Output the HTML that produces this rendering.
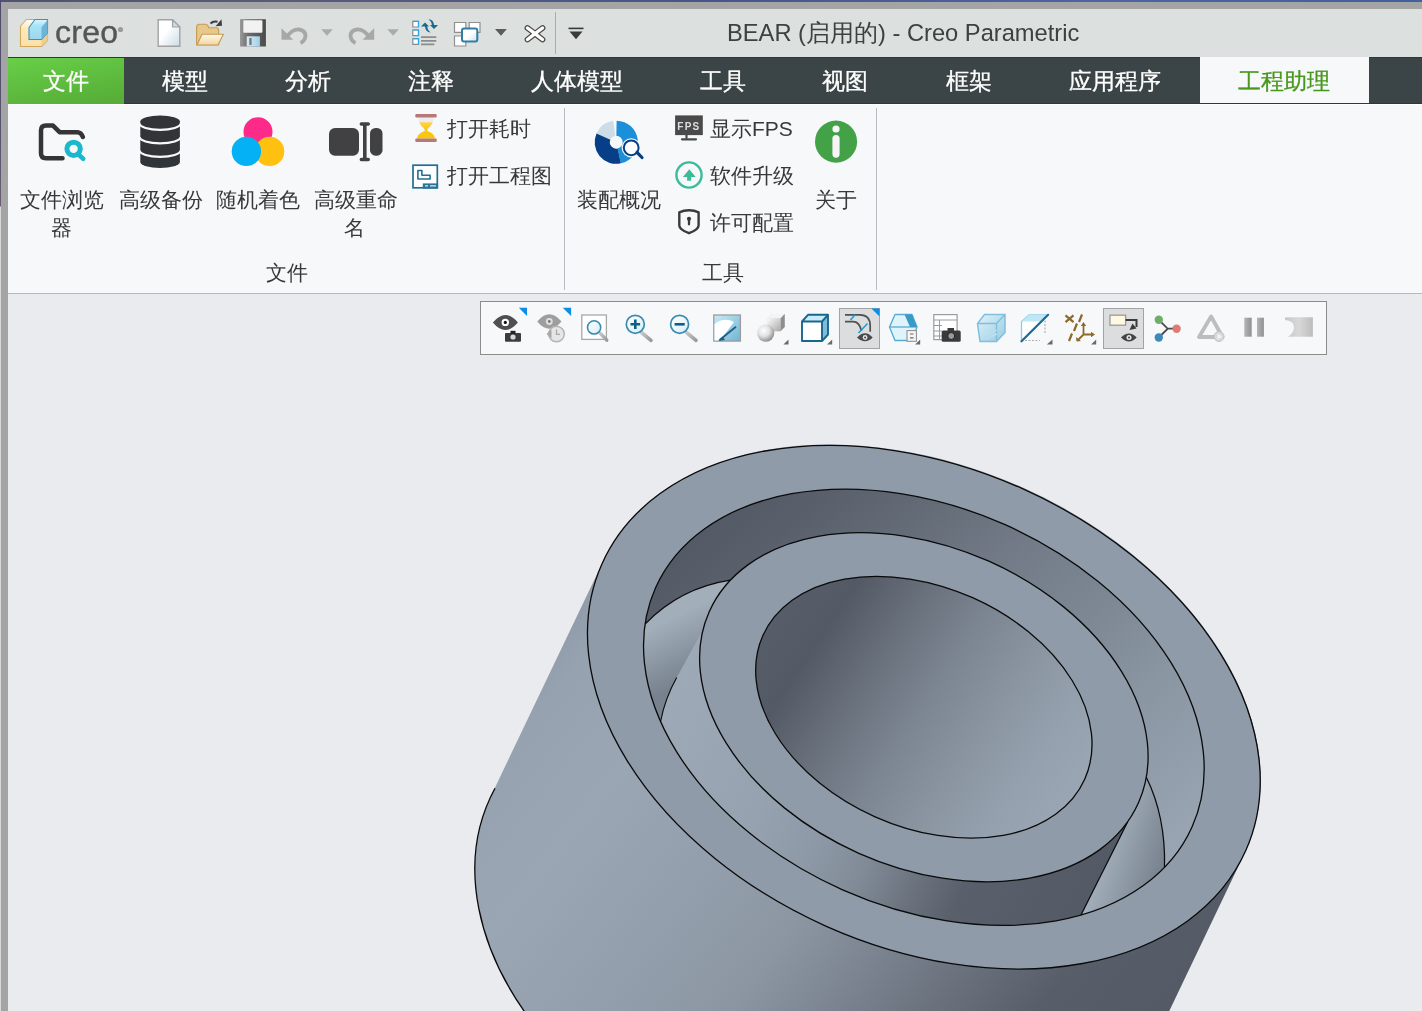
<!DOCTYPE html>
<html><head><meta charset="utf-8">
<style>
*{margin:0;padding:0;box-sizing:border-box}
html,body{width:1422px;height:1011px;overflow:hidden;background:#e9ebee;font-family:"Liberation Sans",sans-serif}
.a{position:absolute}
.t{position:absolute;white-space:nowrap;line-height:1;will-change:transform}
#topband{left:0;top:0;width:1422px;height:2px;background:linear-gradient(90deg,#50526f 0%,#585c7c 20%,#475688 50%,#4c64a6 78%,#40609e 100%)}
#leftband{left:0;top:0;width:1px;height:1011px;background:linear-gradient(180deg,#4a4c6a 0,#5a5570 150px,#6a6070 206px,#d8d8d8 207px,#d8d8d8 100%)}
#frame{left:1px;top:2px;width:1421px;height:1009px;background:#a4a4a4}
#qat{left:8px;top:9px;width:1414px;height:48px;background:#dce0df}
#tabs{left:8px;top:57px;width:1414px;height:47px;background:#3b4446;border-top:1px solid #2f3738;border-bottom:1px solid #30383a}
#filetab{left:8px;top:58px;width:116px;height:46px;background:linear-gradient(170deg,#68cf48,#55ab36)}
#acttab{left:1200px;top:57px;width:169px;height:46px;background:#f7f8fa}
.tab{color:#fff;font-size:23px;top:69.7px;-webkit-text-stroke:0.3px currentColor}
#ribbon{left:8px;top:104px;width:1414px;height:190px;background:#f7f8fa;border-top:1px solid #ffffff;border-bottom:1px solid #b3bcbc}
#view{left:8px;top:294px;width:1414px;height:717px;background:#e9ebee}
.sep{width:1px;background:#b6bcbd}
.lbl{color:#383838;font-size:21px}
#vtb{left:480px;top:301px;width:847px;height:54px;background:#f7f8fa;border:1px solid #8c8c8c}
</style></head><body>
<div class="a" id="topband"></div>
<div class="a" id="frame"></div>
<div class="a" id="leftband"></div>
<div class="a" id="qat"></div>
<div class="a" id="tabs"></div>
<div class="a" id="filetab"></div>
<div class="a" id="acttab"></div>
<div class="t tab" style="left:43px">文件</div>
<div class="t tab" style="left:162px">模型</div>
<div class="t tab" style="left:285px">分析</div>
<div class="t tab" style="left:408px">注释</div>
<div class="t tab" style="left:531px">人体模型</div>
<div class="t tab" style="left:700px">工具</div>
<div class="t tab" style="left:822px">视图</div>
<div class="t tab" style="left:946px">框架</div>
<div class="t tab" style="left:1069px">应用程序</div>
<div class="t tab" style="left:1238px;color:#48981f">工程助理</div>
<div class="t" style="left:727px;top:22.2px;font-size:23.7px;color:#3a4242">BEAR (启用的) - Creo Parametric</div>
<div class="a" id="ribbon"></div>
<div class="a sep" style="left:564px;top:108px;height:182px"></div>
<div class="a sep" style="left:876px;top:108px;height:182px"></div>
<div class="a" id="view"></div>
<div class="a" id="vtb"></div>
<svg class="a" style="left:0;top:0" width="1422" height="1011" viewBox="0 0 1422 1011">
<defs>
<linearGradient id="gBody" gradientUnits="userSpaceOnUse" x1="561.4" y1="424.0" x2="1286.3" y2="990.5"><stop offset="0.1087" stop-color="#8d98a6"/><stop offset="0.1739" stop-color="#97a2b0"/><stop offset="0.2826" stop-color="#9ba6b4"/><stop offset="0.4130" stop-color="#949fad"/><stop offset="0.5348" stop-color="#8c96a3"/><stop offset="0.6783" stop-color="#707884"/><stop offset="0.8011" stop-color="#575e69"/><stop offset="0.9348" stop-color="#535a65"/></linearGradient>
<linearGradient id="gConc" gradientUnits="userSpaceOnUse" x1="503.6" y1="520.2" x2="1344.1" y2="894.3"><stop offset="0.1815" stop-color="#525964"/><stop offset="0.2576" stop-color="#59606b"/><stop offset="0.3370" stop-color="#636b76"/><stop offset="0.4348" stop-color="#717a86"/><stop offset="0.5598" stop-color="#7f8996"/><stop offset="0.6413" stop-color="#8a95a2"/><stop offset="0.7217" stop-color="#929dab"/><stop offset="0.8185" stop-color="#9ca7b5"/></linearGradient>
<linearGradient id="gConv" gradientUnits="userSpaceOnUse" x1="503.6" y1="520.2" x2="1344.1" y2="894.3"><stop offset="0.2446" stop-color="#9ea9b7"/><stop offset="0.3804" stop-color="#97a2b0"/><stop offset="0.4511" stop-color="#8e99a7"/><stop offset="0.5109" stop-color="#818b98"/><stop offset="0.5652" stop-color="#6c747f"/><stop offset="0.6196" stop-color="#59606b"/><stop offset="0.7554" stop-color="#535a65"/></linearGradient>
<linearGradient id="gBore" gradientUnits="userSpaceOnUse" x1="470.8" y1="627.4" x2="1376.9" y2="787.1"><stop offset="0.3087" stop-color="#575e69"/><stop offset="0.3641" stop-color="#535a65"/><stop offset="0.4348" stop-color="#6a727d"/><stop offset="0.5000" stop-color="#7c8592"/><stop offset="0.5652" stop-color="#8a94a1"/><stop offset="0.6304" stop-color="#95a0ae"/><stop offset="0.6913" stop-color="#9ba6b4"/></linearGradient>
<linearGradient id="gWR" gradientUnits="userSpaceOnUse" x1="1105" y1="850" x2="1165" y2="870"><stop offset="0" stop-color="#a3aebb"/><stop offset="1" stop-color="#76808d"/></linearGradient>
<linearGradient id="gWL" gradientUnits="userSpaceOnUse" x1="652" y1="628" x2="680" y2="684"><stop offset="0" stop-color="#a3aebb"/><stop offset="1" stop-color="#78828f"/></linearGradient>
</defs>
<path d="M603.8 559.9 L491.1 795.7 A352.40 239.80 24.00 1 0 1131.4 1090.3 L1131.4 1090.3 L1244.0 854.5 A352.40 239.80 24.00 1 0 603.8 559.9 Z" fill="url(#gBody)"/>
<path d="M495.0 788.2 A352.40 239.80 24.00 0 0 543.8 1036.8" fill="none" stroke="#0a0a0a" stroke-width="1.3"/>
<ellipse cx="923.85" cy="707.25" rx="352.40" ry="239.80" transform="rotate(24.00 923.85 707.25)" fill="#909baa" stroke="#0a0a0a" stroke-width="1.3"/>
<ellipse cx="923.85" cy="707.25" rx="293.67" ry="199.83" transform="rotate(24.00 923.85 707.25)" fill="url(#gConc)"/>
<path d="M645.1 624.1 Q680 588 730.3 580.2 A234.93 159.87 24.00 1 0 1127.7 821.7 L1081.0 915.0 A293.67 199.83 24.00 0 1 645.1 624.1 Z" fill="url(#gConv)"/>
<path d="M1127.7 821.7 L1081.0 915.0 A293.67 199.83 24.00 0 0 1164.5 867.3 Q1165.8 816.9 1146.3 777.3 A234.93 159.87 24.00 0 1 1127.7 821.7 Z" fill="url(#gWR)"/>
<path d="M645.1 624.1 Q680 588 730.3 580.2 L676.7 677.5 Q664.8 698.8 660.6 721.5 A293.67 199.83 24.00 0 1 645.1 624.1 Z" fill="url(#gWL)"/>
<path d="M645.1 624.1 Q680 588 730.3 580.2" fill="none" stroke="#0a0a0a" stroke-width="1.25"/>
<path d="M1127.7 821.7 L1081.0 915.0" fill="none" stroke="#0a0a0a" stroke-width="1.25"/>
<path d="M1146.3 777.3 Q1165.8 816.9 1164.5 867.3" fill="none" stroke="#0a0a0a" stroke-width="1.25"/>
<path d="M676.7 677.5 Q664.8 698.8 660.6 721.5" fill="none" stroke="#0a0a0a" stroke-width="1.1"/>
<ellipse cx="923.85" cy="707.25" rx="293.67" ry="199.83" transform="rotate(24.00 923.85 707.25)" fill="none" stroke="#0a0a0a" stroke-width="1.3"/>
<ellipse cx="923.85" cy="707.25" rx="234.93" ry="159.87" transform="rotate(24.00 923.85 707.25)" fill="#909baa" stroke="#0a0a0a" stroke-width="1.3"/>
<ellipse cx="923.85" cy="707.25" rx="176.20" ry="119.90" transform="rotate(24.00 923.85 707.25)" fill="url(#gBore)" stroke="#0a0a0a" stroke-width="1.3"/>
</svg>
<svg class="a" style="left:0;top:0" width="1422" height="60" viewBox="0 0 1422 60">
<defs>
<linearGradient id="qPage" x1="0" y1="0" x2="1" y2="1"><stop offset="0.4" stop-color="#ffffff"/><stop offset="1" stop-color="#c9dbe6"/></linearGradient>
<linearGradient id="qFold" x1="0" y1="0" x2="0" y2="1"><stop offset="0" stop-color="#fffaf0"/><stop offset="1" stop-color="#f2d49a"/></linearGradient>
<linearGradient id="qSave" x1="0" y1="0" x2="1" y2="0"><stop offset="0" stop-color="#9a9a9a"/><stop offset="0.3" stop-color="#6e6e6e"/><stop offset="1" stop-color="#4a4a4a"/></linearGradient>
<linearGradient id="qShut" x1="0" y1="0" x2="1" y2="0"><stop offset="0" stop-color="#d8ecf6"/><stop offset="1" stop-color="#9fd0ea"/></linearGradient>
<linearGradient id="qCubeF" x1="0" y1="0" x2="0" y2="1"><stop offset="0" stop-color="#ffffff"/><stop offset="0.35" stop-color="#fde8b8"/><stop offset="1" stop-color="#fbe0a8"/></linearGradient>
<linearGradient id="qCubeB" x1="0" y1="0" x2="0" y2="1"><stop offset="0" stop-color="#e0f6fd"/><stop offset="0.3" stop-color="#a8e4f8"/><stop offset="1" stop-color="#9ad8f0"/></linearGradient>
<linearGradient id="qWin" x1="0" y1="0" x2="1" y2="1"><stop offset="0.5" stop-color="#ffffff"/><stop offset="1" stop-color="#cfe0ea"/></linearGradient>
</defs>
<!-- creo cube logo -->
<g stroke-linejoin="round">
<path d="M20.5 26 L26.5 19.5 L47.5 19.5 L47.5 40.5 L41.5 46.5 L20.5 46.5 Z" fill="url(#qCubeF)" stroke="#d4a85a" stroke-width="1.1"/>
<path d="M41.5 46.5 L47.5 40.5 L47.5 33 L41.5 39.5 Z" fill="#f0cf8a"/>
<path d="M29 27.5 L35 19.5 L47.5 19.5 L47.5 33 L41.5 39.5 L29 39.5 Z" fill="url(#qCubeB)" stroke="#3f8fb8" stroke-width="1.1"/>
<path d="M41.5 27.5 L47.5 20 L47.5 33 L41.5 39.5 Z" fill="#6fb4d6"/>
</g>
<!-- new doc -->
<path d="M158.2 19.7 H172.5 L179.8 27 V46.3 H158.2 Z" fill="url(#qPage)" stroke="#a2a2a2" stroke-width="1.4"/>
<path d="M172.5 19.7 V27 H179.8 Z" fill="#c4dcea" stroke="#a2a2a2" stroke-width="1.2" stroke-linejoin="round"/>
<!-- open folder -->
<path d="M196.6 44.6 V27.5 Q196.6 24.3 199.5 24.3 H205.5 Q207.5 24.3 208.3 26.5 L208.8 27.8 H216.2 Q218.6 27.8 218.6 30.2 V44.6 Z" fill="#e8c888" stroke="#c49a55" stroke-width="1.1"/>
<path d="M197 45 L202 34.2 H223.4 L218 45 Z" fill="url(#qFold)" stroke="#c49a55" stroke-width="1.1" stroke-linejoin="round"/>
<path d="M210.5 23.5 Q213.5 20.5 217.5 21.8" fill="none" stroke="#3b3f42" stroke-width="2"/>
<path d="M215.6 26.2 L222 25.8 L221.5 19.3 Z" fill="#3b3f42"/>
<!-- save -->
<path d="M240 19.2 H265.9 V46.5 H240 Z" fill="url(#qSave)"/>
<rect x="243.3" y="20.2" width="19.1" height="12.5" rx="0.8" fill="#f2f2f2"/>
<rect x="246.7" y="36.3" width="13.2" height="10.2" fill="url(#qShut)"/>
<rect x="249.3" y="38" width="2.3" height="7" fill="#777"/>
<!-- undo -->
<path d="M286.5 37.5 Q292 29 299 29.5 Q305.5 30.5 305.5 36 Q305 41 300.5 43" fill="none" stroke="#a6a8a8" stroke-width="3.8"/>
<path d="M281.5 28.3 V39.8 H293.2 Z" fill="#a6a8a8"/>
<path d="M321.2 29.2 H332.8 L327 35.8 Z" fill="#aaacac"/>
<!-- redo -->
<path d="M369.4 37.5 Q364 29 357 29.5 Q350.5 30.5 350.5 36 Q351 41 355.5 43" fill="none" stroke="#a6a8a8" stroke-width="3.8"/>
<path d="M374.2 28.3 V39.8 H362.6 Z" fill="#a6a8a8"/>
<path d="M387.3 29.2 H398.9 L393.1 35.8 Z" fill="#aaacac"/>
<!-- regenerate -->
<g stroke-width="1.2">
<path d="M412.8 21.3 H418.5 V27 H412.8 Z" fill="#fff" stroke="#8a8a8a"/>
<path d="M412.8 21.3 H418.5 V27" fill="none" stroke="#2aa8e8"/>
<path d="M412.8 30 H418.5 V35.7 H412.8 Z" fill="#fff" stroke="#8a8a8a"/>
<path d="M412.8 30 H418.5 V35.7" fill="none" stroke="#2aa8e8"/>
<path d="M412.8 38.7 H418.5 V44.4 H412.8 Z" fill="#fff" stroke="#8a8a8a"/>
<path d="M412.8 38.7 H418.5 V44.4" fill="none" stroke="#2aa8e8"/>
</g>
<path d="M421 37.1 H436.3 M421 40.9 H436.3 M421 44.4 H434.3" stroke="#8c8c8c" stroke-width="1.9"/>
<path d="M421 26.5 L425 22.5 L429 26.5 H427 Q427.5 30 430.5 32.5 Q425.5 32 425 26.5 Z" fill="#17698c"/>
<path d="M438 25 L434 29 L430 25 H432 Q431.5 21.5 428.5 19.3 Q433.5 19.5 434 25 Z" fill="#17698c"/>
<!-- windows -->
<path d="M454.5 22.5 H465.8 V32.3 H454.5 Z M469.2 22.5 H480 V32.3 H469.2 Z M454.5 36 H465.8 V46 H454.5 Z" fill="#fff" stroke="#8f8f8f" stroke-width="1.2"/>
<rect x="462" y="28.5" width="15.3" height="13" rx="2" fill="url(#qWin)" stroke="#2f7ea6" stroke-width="2"/>
<path d="M495 28.9 H506.9 L501 35.8 Z" fill="#5c5c5c"/>
<!-- close X -->
<path d="M527.5 28 L535 33.7 L542.5 28 M527.5 39.5 L535 33.7 L542.5 39.5" fill="none" stroke="#4a4a44" stroke-width="5.8" stroke-linecap="round"/>
<path d="M527.5 28 L535 33.7 L542.5 28 M527.5 39.5 L535 33.7 L542.5 39.5" fill="none" stroke="#ffffff" stroke-width="3.4" stroke-linecap="round"/>
<rect x="555" y="12" width="1" height="42" fill="#a9adad"/>
<rect x="568.5" y="27.6" width="15" height="1.6" fill="#3a3a3a"/>
<path d="M569.5 31.6 H582.5 L576 39.3 Z" fill="#3a3a3a"/>
</svg>
<div class="t" style="left:54.5px;top:15.5px;font-size:32px;color:#545656;letter-spacing:0.3px;-webkit-text-stroke:0.4px #545656">creo</div>
<svg class="a" style="left:116px;top:25px" width="9" height="9"><circle cx="4.5" cy="4.5" r="2.6" fill="#9a9c9c"/></svg>
<svg class="a" style="left:0;top:100px" width="900" height="150" viewBox="0 100 900 150">
<defs>
<linearGradient id="rSand" x1="0" y1="0" x2="0" y2="1"><stop offset="0" stop-color="#ffd54a"/><stop offset="1" stop-color="#f5c400"/></linearGradient>
</defs>
<!-- file browser folder -->
<path d="M62.5 158.3 H46 Q41 158.3 41 153.3 V130.6 Q41 125.6 46 125.6 H53 L59.6 132.2 H77.5 Q81 132.2 82.9 137" fill="none" stroke="#353535" stroke-width="4.5" stroke-linecap="round" stroke-linejoin="round"/>
<circle cx="73.6" cy="148.85" r="6.7" fill="none" stroke="#1ab8cc" stroke-width="5"/>
<path d="M79.6 155.5 L83.2 158.7" stroke="#1ab8cc" stroke-width="4.6" stroke-linecap="round"/>
<!-- database -->
<g fill="#323538">
<path d="M140.3 121.5 V162 A19.8 6 0 0 0 179.9 162 V121.5 A19.8 6 0 0 0 140.3 121.5 Z"/>
</g>
<g fill="none" stroke="#f7f8fa" stroke-width="2.3">
<path d="M139.5 123.6 A20.6 6.2 0 0 0 180.7 123.6"/>
<path d="M139.5 137.1 A20.6 6.2 0 0 0 180.7 137.1"/>
<path d="M139.5 150.6 A20.6 6.2 0 0 0 180.7 150.6"/>
</g>
<!-- random color circles -->
<circle cx="258" cy="131.7" r="14.5" fill="#fe2a8a"/>
<circle cx="269.6" cy="151.4" r="14.7" fill="#ffc010"/>
<circle cx="246.4" cy="151.4" r="14.7" fill="#04b1f4"/>
<!-- rename -->
<rect x="329" y="128" width="30" height="27.7" rx="6" fill="#414143"/>
<rect x="370" y="128" width="12.5" height="27.7" rx="5.5" fill="#414143"/>
<path d="M364.8 124.5 V159" stroke="#414143" stroke-width="3.6"/>
<path d="M361.3 124 H368.3 M361.3 159.5 H368.3" stroke="#414143" stroke-width="3.4" stroke-linecap="round"/>
<!-- hourglass -->
<path d="M418.5 117.5 H433.5 Q433.5 124 428.5 128.5 Q427 130 428.5 131.5 Q433.5 135 433.5 138.3 H418.5 Q418.5 135 423.5 131.5 Q425 130 423.5 128.5 Q418.5 124 418.5 117.5 Z" fill="#eeeaf4"/>
<path d="M419.3 122.3 H432.7 Q431.5 126 428 128 L427 130.5 H425 L424 128 Q420.5 126 419.3 122.3 Z" fill="url(#rSand)"/>
<path d="M425.2 129 H426.8 L427 131 Q434.5 133 435 138.6 H417 Q417.5 133 425 131 Z" fill="#f9c80c"/>
<rect x="415.3" y="114" width="21.4" height="3.6" rx="1" fill="#b77878"/>
<rect x="415.3" y="138.4" width="21.4" height="3.6" rx="1" fill="#b77878"/>
<!-- drawing -->
<rect x="413" y="165.2" width="24.3" height="22.6" fill="#ffffff" stroke="#236f92" stroke-width="1.7"/>
<path d="M417.9 170.5 H421.9 V175.3 H430.1 V179 H417.9 Z" fill="none" stroke="#236f92" stroke-width="1.6" stroke-linejoin="round"/>
<rect x="422.8" y="183.4" width="15.3" height="5.2" fill="#2a7398"/>
<path d="M425 185.8 H428 M430 185.8 H436" stroke="#dfeaf0" stroke-width="1.3"/>
<!-- assembly overview -->
<path d="M596.52 133.46 A21.6 21.6 0 0 1 613.24 120.86 L615.36 135.91 A6.4 6.4 0 0 0 610.40 139.65 Z" fill="#cddde8"/>
<path d="M616.63 120.65 A21.6 21.6 0 0 1 620.93 163.34 L617.64 148.50 A6.4 6.4 0 0 0 616.36 135.85 Z" fill="#1b8fd9"/>
<path d="M620.93 163.34 A21.6 21.6 0 0 1 596.52 133.46 L610.40 139.65 A6.4 6.4 0 0 0 617.64 148.50 Z" fill="#063f87"/>
<circle cx="631.2" cy="147.8" r="9.6" fill="#f7f8fa"/>
<path d="M637 152.3 L642 157.5" stroke="#f7f8fa" stroke-width="5.5" stroke-linecap="round"/>
<circle cx="631.2" cy="147.8" r="7.4" fill="#ffffff" stroke="#063f87" stroke-width="2"/>
<path d="M637 152.3 L642 157.5" stroke="#063f87" stroke-width="3.2" stroke-linecap="round"/>
<!-- FPS -->
<rect x="675.1" y="115.4" width="27.7" height="19.7" fill="#4a4a4a"/>
<text x="688.9" y="130.2" font-family="Liberation Sans" font-size="10" font-weight="bold" fill="#dddddd" text-anchor="middle" letter-spacing="1.3">FPS</text>
<path d="M686.5 135 V137.5 M682 139.3 H696" stroke="#4a4a4a" stroke-width="2.2" stroke-linecap="round"/>
<!-- upgrade -->
<circle cx="689" cy="175" r="12.6" fill="none" stroke="#3cbb9b" stroke-width="2.4"/>
<path d="M682.9 176.9 L689.3 169.2 L695.7 176.9 H691.2 V180.7 H687.1 V176.9 Z" fill="#3cbb9b"/>
<!-- shield -->
<path d="M689 210.3 Q694.5 210.3 698.6 212.3 V225.5 Q698.6 229.5 689 233.2 Q679.3 229.5 679.3 225.5 V212.3 Q683.5 210.3 689 210.3 Z" fill="none" stroke="#3a3a3a" stroke-width="2.4" stroke-linejoin="round"/>
<circle cx="689" cy="218.8" r="2.1" fill="#3a3a3a"/>
<path d="M689 219 V224.3" stroke="#3a3a3a" stroke-width="2.3" stroke-linecap="round"/>
<!-- info -->
<circle cx="836.05" cy="141.65" r="21.05" fill="#43a148"/>
<circle cx="836" cy="129" r="3.6" fill="#f7f3f7"/>
<rect x="832.4" y="135" width="7.2" height="22.7" rx="3.6" fill="#f7f3f7"/>
</svg>
<svg class="a" style="left:480px;top:300px" width="850" height="56" viewBox="480 300 850 56">
<defs>
<linearGradient id="vLens" x1="0" y1="0" x2="1" y2="1"><stop offset="0" stop-color="#ffffff"/><stop offset="1" stop-color="#d5eef8"/></linearGradient>
<linearGradient id="vHandle" x1="0" y1="0" x2="1" y2="1"><stop offset="0" stop-color="#c8c8c8"/><stop offset="1" stop-color="#9a9a9a"/></linearGradient>
<linearGradient id="vRep" x1="0" y1="0" x2="1" y2="1"><stop offset="0" stop-color="#c9ebf7"/><stop offset="1" stop-color="#6fb4d2"/></linearGradient>
<radialGradient id="vSph" cx="0.38" cy="0.35" r="0.75"><stop offset="0" stop-color="#ffffff"/><stop offset="0.45" stop-color="#e2e2e2"/><stop offset="1" stop-color="#7a7a7a"/></radialGradient>
<linearGradient id="vCubeS" x1="0" y1="0" x2="1" y2="1"><stop offset="0" stop-color="#fafafa"/><stop offset="1" stop-color="#a8a8a8"/></linearGradient>
<linearGradient id="vGlass" x1="0" y1="0" x2="1" y2="1"><stop offset="0" stop-color="#d9f1fa"/><stop offset="1" stop-color="#7fc0dc"/></linearGradient>
<linearGradient id="vGray" x1="0" y1="0" x2="1" y2="0"><stop offset="0" stop-color="#b5b5b5"/><stop offset="1" stop-color="#909090"/></linearGradient>
<linearGradient id="vBar" x1="0" y1="0" x2="1" y2="0"><stop offset="0" stop-color="#c8c8c8"/><stop offset="0.5" stop-color="#d8d8d8"/><stop offset="1" stop-color="#bdbdbd"/></linearGradient>
</defs>
<!-- 1 saved views -->
<path d="M492.9 322.5 Q505.3 307.5 517.9 322.5 Q505.3 337.5 492.9 322.5 Z" fill="#4f4f4f"/>
<circle cx="505.3" cy="322.4" r="3.7" fill="#ffffff"/>
<circle cx="505.3" cy="322.4" r="1.6" fill="#111"/>
<rect x="505" y="333" width="16" height="8.7" rx="1" fill="#3c3c3c"/>
<rect x="510.5" y="330.8" width="5" height="3" fill="#222"/>
<circle cx="513" cy="337" r="2.6" fill="#d8d8d8"/>
<path d="M518.8 307.8 H527 V316 Z" fill="#0a8ee8"/>
<!-- 2 history -->
<path d="M537.2 321.5 Q549.3 307 561.5 321.5 Q549.3 336 537.2 321.5 Z" fill="#9e9e9e"/>
<circle cx="549.3" cy="321.5" r="3.4" fill="#e0e0e0"/>
<circle cx="549.3" cy="321.5" r="1.4" fill="#777"/>
<circle cx="556.5" cy="334" r="7.8" fill="#e6e6e6" stroke="#b4b4b4" stroke-width="1.5"/>
<path d="M556.5 329.5 V334.3 H560" fill="none" stroke="#a8a8a8" stroke-width="1.3"/>
<path d="M546.5 334 L551.5 329.5 V338.5 Z" fill="#a8a8a8"/>
<path d="M562.7 307.8 H571.1 V316 Z" fill="#0a8ee8"/>
<!-- 3 refit -->
<rect x="581.8" y="315" width="24.6" height="24.4" fill="#ffffff" stroke="#a8a8a8" stroke-width="1.3"/>
<path d="M600 333 L606.8 340.2" stroke="url(#vHandle)" stroke-width="3.4" stroke-linecap="round"/>
<circle cx="594.1" cy="327.4" r="6.6" fill="url(#vLens)" stroke="#3a8bb0" stroke-width="1.6"/>
<!-- 4 zoom in -->
<path d="M641.5 332.5 L651 340.3" stroke="url(#vHandle)" stroke-width="3.6" stroke-linecap="round"/>
<circle cx="635.3" cy="324.3" r="9" fill="url(#vLens)" stroke="#3a8bb0" stroke-width="1.7"/>
<path d="M630.5 324.3 H640.1 M635.3 319.5 V329.1" stroke="#0f5e86" stroke-width="2.6"/>
<!-- 5 zoom out -->
<path d="M686.5 332.5 L696 340.3" stroke="url(#vHandle)" stroke-width="3.6" stroke-linecap="round"/>
<circle cx="679.6" cy="324.3" r="9" fill="url(#vLens)" stroke="#3a8bb0" stroke-width="1.7"/>
<path d="M674.6 324.3 H684.7" stroke="#0f5e86" stroke-width="2.6"/>
<!-- 6 repaint -->
<rect x="713.8" y="315" width="26.6" height="26.1" fill="url(#vRep)" stroke="#9c9c9c" stroke-width="1.3"/>
<path d="M714.5 340.4 V324 Q724 316.5 734 322 L720 340.4 Z" fill="#ffffff"/>
<path d="M719.5 340 L736 326.8" stroke="#1d5f86" stroke-width="1.8"/>
<path d="M718 341 L723 337 L725 340 Z" fill="#1d5f86"/>
<!-- 7 shading -->
<path d="M767.8 318.5 L772 314.1 H784.7 V327 L780.5 331.2 H767.8 Z" fill="#cfcfcf"/>
<path d="M767.8 318.5 L772 314.1 H784.7 L780.5 318.5 Z" fill="#f4f4f4"/>
<path d="M780.5 318.5 L784.7 314.1 V327 L780.5 331.2 Z" fill="#8e8e8e"/>
<rect x="767.8" y="318.5" width="12.7" height="12.7" fill="url(#vCubeS)"/>
<circle cx="765.7" cy="333.1" r="8.6" fill="url(#vSph)"/>
<path d="M783.4 344.5 H788.5 V339.4 Z" fill="#6a6a6a"/>
<!-- 8 named views cube -->
<path d="M802 321.5 L808 314.8 H828 V334.5 L822 341 H802 Z" fill="#7fbcd9"/>
<path d="M802 321.5 L808 314.8 H828 L822 321.5 Z" fill="#c7ebf8"/>
<rect x="802" y="321.5" width="20" height="19.5" fill="#ffffff"/>
<path d="M802 321.5 L808 314.8 H828 V334.5 L822 341 H802 Z M802 321.5 H822 V341 M822 321.5 L828 314.8" fill="none" stroke="#19668e" stroke-width="1.9" stroke-linejoin="round"/>
<path d="M827 344.5 H832.2 V339.4 Z" fill="#6a6a6a"/>
<!-- 9 selected button -->
<rect x="839.5" y="308.5" width="40" height="40" fill="#dcdddf" stroke="#a3a3a3" stroke-width="1"/>
<path d="M871.4 308.5 H879.5 V316.6 Z" fill="#0a8ee8"/>
<path d="M845 314.8 H860 Q870.2 314.8 870.2 326 V331.8 M845 321.7 H853 Q859.5 321.7 861.5 331" fill="none" stroke="#505050" stroke-width="1.7"/>
<path d="M850.5 320 L855 314.8 M858.5 333 L867.5 323.5" stroke="#1aa0d8" stroke-width="1.6"/>
<path d="M857 337.5 Q865.1 329 872.7 337.5 Q865.1 345 857 337.5 Z" fill="#4a4a4a"/>
<circle cx="865.1" cy="337.5" r="2.4" fill="#e6e6e6"/>
<circle cx="865.1" cy="337.5" r="1" fill="#444"/>
<!-- 10 layers hex -->
<path d="M889.5 327 L895 314.5 H912 L917 327 L912 340.5 H895 Z" fill="#dff3fb" stroke="#58acd2" stroke-width="1.4" stroke-linejoin="round"/>
<path d="M889.5 327 H917" stroke="#58acd2" stroke-width="1.3"/>
<path d="M904.5 314.5 L912 314.5 L917 327 L910 327 Z" fill="#3a9ac6"/>
<rect x="907" y="330.6" width="9.4" height="10.7" fill="#f4f4f4" stroke="#8a8a8a" stroke-width="1"/>
<path d="M910 334 H913.5 M910 337.8 H913.5" stroke="#666" stroke-width="1.2"/>
<path d="M915.1 344.5 H920.2 V339.4 Z" fill="#6a6a6a"/>
<!-- 11 table camera -->
<rect x="933.8" y="314.6" width="23.3" height="25" fill="#ffffff" stroke="#9c9c9c" stroke-width="1.2"/>
<path d="M934 320 H957 M934 325.5 H942 M934 331 H942 M934 336 H942 M939.5 320 V339.5" stroke="#9c9c9c" stroke-width="1"/>
<rect x="941.7" y="330.5" width="19" height="11.2" rx="1.5" fill="#3a3a3a"/>
<rect x="947.5" y="328" width="6.5" height="3" fill="#3a3a3a"/>
<circle cx="951.2" cy="336" r="3.5" fill="#9a9a9a" stroke="#222" stroke-width="1"/>
<!-- 12 transparent cube -->
<path d="M977.5 323.5 L984.5 314.5 H1005 V332.5 L996.5 341.5 H980 Z" fill="url(#vGlass)" opacity="0.8"/>
<path d="M977.5 323.5 L984.5 314.5 H1005 V332.5 L996.5 341.5 H980 Z M977.5 323.5 H996.5 L1005 314.5 M996.5 323.5 V341.5" fill="none" stroke="#7fc0dc" stroke-width="1.5"/>
<path d="M985 336 L996.5 330 M986 339 L997 334" stroke="#b8e0ef" stroke-width="1.5"/>
<!-- 13 section -->
<path d="M1021.5 341 V321.5 L1029 314.8 H1048 Z" fill="#ffffff" stroke="#8ccde6" stroke-width="1.3"/>
<path d="M1021.5 321.5 L1029 314.8 H1048 L1041 321.5 Z" fill="#bfe6f5"/>
<path d="M1025 340.5 H1040 M1045 333 V318" stroke="#b0b0b0" stroke-width="1.2" stroke-dasharray="2 1.5"/>
<path d="M1021.5 341.3 L1048.1 314.8" stroke="#1d6a98" stroke-width="2.2" stroke-linecap="round"/>
<path d="M1046.8 344.5 H1052.5 V339.4 Z" fill="#6a6a6a"/>
<!-- 14 datum display -->
<path d="M1065.5 315.3 L1073.5 322.2 M1073.5 315.3 L1065.5 322.2" stroke="#8b6a2a" stroke-width="2.2"/>
<path d="M1079 322 L1082 314.5 M1074 331 L1077 323.5 M1069 341 L1072 333.5" stroke="#8b6a2a" stroke-width="2.2"/>
<path d="M1083.5 334.5 V325 M1083.5 334.5 H1092 M1083.5 334.5 L1078 340" stroke="#8b6a2a" stroke-width="1.8"/>
<path d="M1080.8 326 L1083.5 322 L1086.2 326 Z M1091 331.8 L1095 334.5 L1091 337.2 Z M1076 337 L1076.5 341.5 L1081 341 Z" fill="#8b6a2a"/>
<path d="M1091.1 344.5 H1096.2 V339.4 Z" fill="#6a6a6a"/>
<!-- 15 selected button -->
<rect x="1103.5" y="308.5" width="40" height="40" fill="#dcdddf" stroke="#a3a3a3" stroke-width="1"/>
<rect x="1110" y="315.2" width="15.6" height="10" fill="#fff8e2" stroke="#9a9a9a" stroke-width="1.3"/>
<path d="M1125.6 320 H1136.5 V327" fill="none" stroke="#3a3a3a" stroke-width="2"/>
<path d="M1132.5 323.5 L1136.5 328.5 L1129.5 330 Z" fill="#3a3a3a"/>
<path d="M1121 337.5 Q1129 329.5 1136.7 337.5 Q1129 345.5 1121 337.5 Z" fill="#444"/>
<circle cx="1129" cy="337.5" r="2.5" fill="#e6e6e6"/>
<circle cx="1129" cy="337.5" r="1" fill="#444"/>
<!-- 16 graph -->
<path d="M1158.8 319.8 L1167.7 328.7 L1158.8 337.5 M1167.7 328.7 H1176.6" stroke="#4a4a4a" stroke-width="1.8" fill="none"/>
<circle cx="1158.8" cy="319.8" r="4.2" fill="#6fae6a"/>
<circle cx="1176.6" cy="328.7" r="4.2" fill="#e07a74"/>
<circle cx="1158.8" cy="337.5" r="4.2" fill="#3d8ab8"/>
<!-- 17 triangle play -->
<path d="M1211.1 316.5 L1199 337 H1222.5 Z" fill="none" stroke="#bdbdbd" stroke-width="3.8" stroke-linejoin="round"/>
<circle cx="1219" cy="336.5" r="5" fill="#dadada" stroke="#c0c0c0" stroke-width="1"/>
<path d="M1217.5 333.5 L1222 336.5 L1217.5 339.5 Z" fill="#f4f4f4"/>
<!-- 18 pause -->
<rect x="1244.3" y="317.7" width="7.4" height="19" fill="url(#vGray)"/>
<rect x="1257" y="317.7" width="6.9" height="19" fill="url(#vGray)"/>
<!-- 19 shape -->
<path d="M1285 317.2 H1312.9 V336.7 H1288 Q1294 333 1294 327 Q1294 321 1285 320 Z" fill="url(#vBar)"/>
</svg>

<!-- ribbon labels -->
<div class="t lbl" style="left:20px;top:189px">文件浏览</div>
<div class="t lbl" style="left:51px;top:217px">器</div>
<div class="t lbl" style="left:119px;top:189px">高级备份</div>
<div class="t lbl" style="left:216px;top:189px">随机着色</div>
<div class="t lbl" style="left:314px;top:189px">高级重命</div>
<div class="t lbl" style="left:344px;top:217px">名</div>
<div class="t lbl" style="left:447px;top:118px">打开耗时</div>
<div class="t lbl" style="left:447px;top:165px">打开工程图</div>
<div class="t lbl" style="left:266px;top:262px">文件</div>
<div class="t lbl" style="left:577px;top:189px">装配概况</div>
<div class="t lbl" style="left:710px;top:118px">显示FPS</div>
<div class="t lbl" style="left:710px;top:165px">软件升级</div>
<div class="t lbl" style="left:710px;top:212px">许可配置</div>
<div class="t lbl" style="left:815px;top:189px">关于</div>
<div class="t lbl" style="left:702px;top:262px">工具</div>
</body></html>
